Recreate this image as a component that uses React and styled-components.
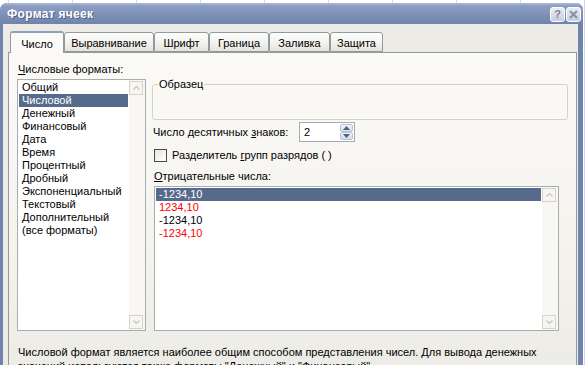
import React from 'react'
import styled, { createGlobalStyle } from 'styled-components'

const GlobalStyle = createGlobalStyle`
  html, body {
    margin: 0;
    padding: 0;
    overflow: hidden;
  }
  body {
    width: 586px;
    height: 365px;
    background-color: #ffffff;
    background-image: repeating-linear-gradient(
      90deg,
      transparent 0px,
      transparent 8px,
      #d0d7e5 8px,
      #d0d7e5 9px,
      transparent 9px,
      transparent 64px
    );
    font-family: 'Liberation Sans', Arial, sans-serif;
    font-size: 11px;
    color: #000;
  }
`

const formats = [
  'Общий',
  'Числовой',
  'Денежный',
  'Финансовый',
  'Дата',
  'Время',
  'Процентный',
  'Дробный',
  'Экспоненциальный',
  'Текстовый',
  'Дополнительный',
  '(все форматы)',
]

const negatives = [
  { text: '-1234,10', red: false },
  { text: '1234,10', red: true },
  { text: '-1234,10', red: false },
  { text: '-1234,10', red: true },
]

const tabs = [
  { label: 'Число', width: 54 },
  { label: 'Выравнивание', width: 90 },
  { label: 'Шрифт', width: 55 },
  { label: 'Граница', width: 60 },
  { label: 'Заливка', width: 61 },
  { label: 'Защита', width: 53 },
]

function App() {
  return (
    <>
      <GlobalStyle />
      <Window>
        <TitleBar>
          <Title>Формат ячеек</Title>
          <TitleButtons>
            <CaptionButton>?</CaptionButton>
            <CaptionButton>
              <svg width="9" height="9" viewBox="0 0 9 9">
                <path d="M1 1 L8 8 M8 1 L1 8" stroke="#8a8f99" strokeWidth="2" />
              </svg>
            </CaptionButton>
          </TitleButtons>
        </TitleBar>
        <Client>
          <TabRow>
            {tabs.map((t, i) => (
              <Tab key={t.label} width={t.width} active={i === 0}>
                {t.label}
              </Tab>
            ))}
          </TabRow>
          <Panel>
            <Columns>
              <LeftColumn>
                <Label>
                  <u>Ч</u>исловые форматы:
                </Label>
                <ListBox height={252}>
                  <ListItems>
                    {formats.map((f, i) => (
                      <ListItem key={f} selected={i === 1}>
                        {f}
                      </ListItem>
                    ))}
                  </ListItems>
                  <ScrollTrack>
                    <ScrollButton>
                      <Chevron up />
                    </ScrollButton>
                    <ScrollButton>
                      <Chevron />
                    </ScrollButton>
                  </ScrollTrack>
                </ListBox>
              </LeftColumn>
              <RightColumn>
                <GroupBox>
                  <Legend>Образец</Legend>
                </GroupBox>
                <FieldRow>
                  <Label>
                    Число десятичных <u>з</u>наков:
                  </Label>
                  <Spinner>
                    <SpinValue>2</SpinValue>
                    <SpinButtons>
                      <SpinButton>
                        <Arrow up />
                      </SpinButton>
                      <SpinButton>
                        <Arrow />
                      </SpinButton>
                    </SpinButtons>
                  </Spinner>
                </FieldRow>
                <CheckRow>
                  <CheckBox />
                  <Label>
                    Разделитель <u>г</u>рупп разрядов ( )
                  </Label>
                </CheckRow>
                <SectionLabel>
                  <u>О</u>трицательные числа:
                </SectionLabel>
                <ListBox height={145} wide>
                  <ListItems>
                    {negatives.map((n, i) => (
                      <ListItem key={i} selected={i === 0} red={n.red}>
                        {n.text}
                      </ListItem>
                    ))}
                  </ListItems>
                  <ScrollTrack>
                    <ScrollButton>
                      <Chevron up />
                    </ScrollButton>
                    <ScrollButton>
                      <Chevron />
                    </ScrollButton>
                  </ScrollTrack>
                </ListBox>
              </RightColumn>
            </Columns>
            <Description>
              Числовой формат является наиболее общим способом представления чисел. Для вывода денежных
              значений используются также форматы "Денежный" и "Финансовый".
            </Description>
          </Panel>
        </Client>
      </Window>
    </>
  )
}

function Chevron({ up }) {
  return (
    <svg width="7" height="4" viewBox="0 0 7 4">
      <path
        d={up ? 'M0.5 3.5 L3.5 0.5 L6.5 3.5' : 'M0.5 0.5 L3.5 3.5 L6.5 0.5'}
        fill="none"
        stroke="#c9c6b8"
        strokeWidth="1.2"
      />
    </svg>
  )
}

function Arrow({ up }) {
  return (
    <svg width="7" height="4" viewBox="0 0 7 4">
      <path d={up ? 'M0 4 L3.5 0 L7 4 Z' : 'M0 0 L3.5 4 L7 0 Z'} fill="#4d6185" />
    </svg>
  )
}

const Window = styled.div`
  margin-top: 3px;
  width: 583px;
  height: 362px;
  display: flex;
  flex-direction: column;
  background: #6f83ad;
  border-radius: 7px 7px 0 0;
  overflow: hidden;
`

const TitleBar = styled.div`
  height: 21px;
  flex: none;
  display: flex;
  align-items: center;
  justify-content: space-between;
  padding: 0 2px 0 7px;
  background: linear-gradient(#b0bdd8 0px, #8c9dc2 3px, #7d90b7 12px, #6f84ad 21px);
`

const Title = styled.span`
  color: #ffffff;
  font-weight: bold;
  font-size: 12px;
  letter-spacing: 0.3px;
  text-shadow: 1px 1px 0 #4f6189;
`

const TitleButtons = styled.div`
  display: flex;
  gap: 1px;
  margin-top: 2px;
`

const CaptionButton = styled.div`
  width: 13px;
  height: 13px;
  border: 1px solid #ffffff;
  border-radius: 3px;
  display: flex;
  align-items: center;
  justify-content: center;
  background: linear-gradient(#e9ecf3, #c6cedf);
  color: #7d828d;
  font-weight: bold;
  font-size: 11px;
  line-height: 1;
`

const Client = styled.div`
  flex: 1;
  margin: 0 5px 0 3px;
  padding: 7px 0 0 5px;
  background: #ecebe5;
  display: flex;
  flex-direction: column;
  min-height: 0;
`

const TabRow = styled.div`
  display: flex;
  align-items: flex-end;
  height: 22px;
  margin-left: 2px;
  position: relative;
  z-index: 1;
`

const Tab = styled.div`
  width: ${(p) => p.width}px;
  height: ${(p) => (p.active ? 22 : 20)}px;
  box-sizing: border-box;
  display: flex;
  align-items: center;
  justify-content: center;
  padding-top: ${(p) => (p.active ? 1 : 2)}px;
  margin-bottom: ${(p) => (p.active ? -1 : 0)}px;
  border: 1px solid #919b9c;
  border-top: ${(p) => (p.active ? '2px solid #8ea0c4' : '1px solid #919b9c')};
  border-bottom: ${(p) => (p.active ? 'none' : '1px solid #919b9c')};
  border-radius: 3px 3px 0 0;
  background: ${(p) =>
    p.active ? '#fbfaf7' : 'linear-gradient(#fefefe, #f2f1ec 60%, #e4e2da)'};
  white-space: nowrap;
`

const Panel = styled.div`
  flex: 1;
  width: 569px;
  box-sizing: border-box;
  border: 1px solid #919b9c;
  border-bottom: none;
  background: linear-gradient(#fbfaf7 0%, #f4f3ee 60%, #ecebe5 100%);
  padding: 10px 8px 0 8px;
  display: flex;
  flex-direction: column;
`

const Columns = styled.div`
  display: grid;
  grid-template-columns: 129px 418px;
  column-gap: 6px;
`

const LeftColumn = styled.div`
  display: flex;
  flex-direction: column;
  gap: 3px;
`

const RightColumn = styled.div`
  display: flex;
  flex-direction: column;
  padding-top: 15px;
`

const Label = styled.div`
  line-height: 13px;
  padding-left: 1px;
  white-space: nowrap;
`

const SectionLabel = styled(Label)`
  margin-top: 8px;
  padding-left: 2px;
`

const ListBox = styled.div`
  height: ${(p) => p.height}px;
  width: ${(p) => (p.wide ? '405px' : 'auto')};
  margin-top: ${(p) => (p.wide ? 3 : 0)}px;
  margin-left: ${(p) => (p.wide ? 2 : 0)}px;
  box-sizing: border-box;
  border: 1px solid #a5acb2;
  background: #ffffff;
  display: flex;
`

const ListItems = styled.div`
  flex: 1;
  padding: 1px 1px 0 1px;
`

const ListItem = styled.div`
  height: 13px;
  line-height: 13px;
  padding-left: 3px;
  white-space: nowrap;
  background: ${(p) => (p.selected ? '#566a8c' : 'transparent')};
  color: ${(p) => (p.selected ? '#ffffff' : p.red ? '#ff0000' : '#000000')};
`

const ScrollTrack = styled.div`
  width: 15px;
  flex: none;
  background: #f8f7f3;
  display: flex;
  flex-direction: column;
  justify-content: space-between;
  padding: 1px 1px 1px 0;
`

const ScrollButton = styled.div`
  width: 12px;
  height: 12px;
  border: 1px solid #d6d4c8;
  background: #f6f5f0;
  display: flex;
  align-items: center;
  justify-content: center;
`

const GroupBox = styled.fieldset`
  margin: 0;
  width: 416px;
  height: 42px;
  box-sizing: border-box;
  border: 1px solid #d3d2c6;
  border-radius: 3px;
  padding: 0 5px;
`

const Legend = styled.legend`
  padding: 0 1px;
  line-height: 13px;
  color: #000;
`

const FieldRow = styled.div`
  display: flex;
  align-items: center;
  margin-top: 2px;
  height: 20px;
`

const Spinner = styled.div`
  width: 56px;
  height: 20px;
  box-sizing: border-box;
  border: 1px solid #a5acb2;
  background: #ffffff;
  display: flex;
  align-items: center;
  justify-content: space-between;
  padding: 1px;
  margin-left: auto;
  margin-right: 215px;
`

const SpinValue = styled.span`
  padding-left: 3px;
`

const SpinButtons = styled.div`
  display: flex;
  flex-direction: column;
`

const SpinButton = styled.div`
  width: 13px;
  height: 8px;
  box-sizing: border-box;
  border: 1px solid #b9c4d8;
  border-radius: 2px;
  background: linear-gradient(#f3f4f8, #d3d9e6);
  display: flex;
  align-items: center;
  justify-content: center;
`

const CheckRow = styled.div`
  display: flex;
  align-items: center;
  gap: 4px;
  margin-top: 7px;
  margin-left: 2px;
  height: 13px;
`

const CheckBox = styled.div`
  width: 13px;
  height: 13px;
  box-sizing: border-box;
  border: 1px solid #4a4a4a;
  background: linear-gradient(135deg, #e6e5de, #ffffff);
`

const Description = styled.div`
  margin-top: 14px;
  padding-left: 1px;
  line-height: 14px;
  width: 545px;
`

export default App
